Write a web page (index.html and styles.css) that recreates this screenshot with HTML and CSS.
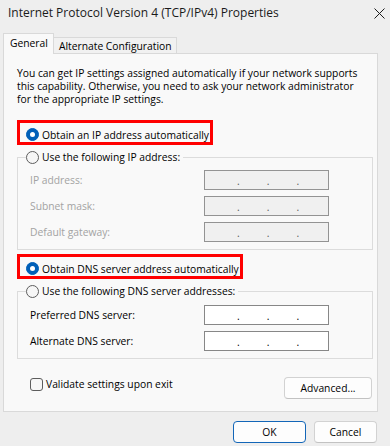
FILE: index.html
```html
<!DOCTYPE html>
<html>
<head>
<meta charset="utf-8">
<link rel="stylesheet" href="styles.css">
</head>
<body>
<div class="window">
  <div class="titlebar">
    <span class="title">Internet Protocol Version 4 (TCP/IPv4) Properties</span>
    <svg class="close" width="11" height="11" viewBox="0 0 11 11"><path d="M0.5 0.5 L10.5 10.5 M10.5 0.5 L0.5 10.5" stroke="#1c1c1c" stroke-width="1" fill="none"/></svg>
  </div>
  <div class="tabs">
    <div class="tab active">General</div>
    <div class="tab">Alternate Configuration</div>
  </div>
  <div class="panel">
    <p class="intro">You can get IP settings assigned automatically if your network supports<br>this capability. Otherwise, you need to ask your network administrator<br>for the appropriate IP settings.</p>

    <div class="highlight">
      <span class="radio on"></span><span>Obtain an IP address automatically</span>
    </div>

    <fieldset class="group">
      <legend><span class="radio"></span><span>Use the following IP address:</span></legend>
      <div class="rows">
        <span class="label disabled">IP address:</span>
        <div class="ip disabled"><span>.</span><span>.</span><span>.</span></div>
        <span class="label disabled">Subnet mask:</span>
        <div class="ip disabled"><span>.</span><span>.</span><span>.</span></div>
        <span class="label disabled">Default gateway:</span>
        <div class="ip disabled"><span>.</span><span>.</span><span>.</span></div>
      </div>
    </fieldset>

    <div class="highlight">
      <span class="radio on"></span><span>Obtain DNS server address automatically</span>
    </div>

    <fieldset class="group">
      <legend><span class="radio"></span><span>Use the following DNS server addresses:</span></legend>
      <div class="rows dns">
        <span class="label">Preferred DNS server:</span>
        <div class="ip"><span>.</span><span>.</span><span>.</span></div>
        <span class="label">Alternate DNS server:</span>
        <div class="ip"><span>.</span><span>.</span><span>.</span></div>
      </div>
    </fieldset>

    <div class="bottom-row">
      <label class="check"><span class="box"></span><span>Validate settings upon exit</span></label>
      <button class="btn advanced">Advanced...</button>
    </div>
  </div>
  <div class="actions">
    <button class="btn ok">OK</button>
    <button class="btn cancel">Cancel</button>
  </div>
</div>
</body>
</html>
```
FILE: styles.css
```css
* { box-sizing: border-box; }
html, body { margin: 0; padding: 0; }
body {
  width: 390px;
  height: 446px;
  overflow: hidden;
  background: #eeeeee;
  font-family: "Open Sans", "Noto Sans", sans-serif;
  font-size: 10.3px;
  color: #000;
}
.window { width: 390px; height: 446px; }

.titlebar {
  height: 25px;
  display: flex;
  align-items: center;
  justify-content: space-between;
  padding: 0 5px 0 8px;
}
.title { font-size: 12px; color: #1a1a1a; }
.close { margin-top: 1px; }

.tabs {
  margin-top: 8px;
  padding-left: 3px;
  display: flex;
  align-items: flex-end;
  height: 20px;
  position: relative;
  z-index: 1;
}
.tab {
  height: 16px;
  display: flex;
  align-items: center;
  padding: 0 4px 0 5px;
  border: 1px solid #d9d9d9;
  border-left: none;
  border-bottom: none;
  background: #f1f1f1;
  line-height: 14px;
}
.tab.active {
  height: 21px;
  margin-bottom: -1px;
  border-left: 1px solid #d9d9d9;
  background: #f9f9f9;
  padding: 0 5px 2px 6px;
}

.panel {
  width: 375px;
  height: 359px;
  margin-left: 3px;
  border: 1px solid #d9d9d9;
  background: #f9f9f9;
  padding: 13px 4px 0 13px;
  display: flex;
  flex-direction: column;
  align-items: flex-start;
}
.intro {
  margin: 0;
  line-height: 13px;
}

.highlight {
  margin-top: 14px;
  height: 25px;
  border: 3px solid #ff0000;
  display: flex;
  align-items: center;
  gap: 3px;
  padding: 4px 1px 0 6px;
  line-height: 14px;
}
.group + .highlight { margin-top: 4px; }

.radio {
  width: 13px;
  height: 13px;
  border-radius: 50%;
  border: 1px solid #5d5d5d;
  background: #f6f6f6;
  display: inline-flex;
  align-items: center;
  justify-content: center;
  flex: none;
}
.radio.on {
  background: #005fb8;
  border-color: #005fb8;
}
.radio.on::after {
  content: "";
  width: 5px;
  height: 5px;
  border-radius: 50%;
  background: #ffffff;
}

.group {
  margin: 4px 0 0 0;
  padding: 0;
  width: 356px;
  min-width: 0;
  border: 1px solid #dcdcdc;
}
.group legend {
  margin-left: 8px;
  padding: 0 3px 0 0;
  height: 16px;
  display: flex;
  align-items: center;
  gap: 3px;
  line-height: 16px;
  background: #f9f9f9;
}

.rows {
  display: grid;
  grid-template-columns: 174px 125px;
  grid-auto-rows: 20px;
  row-gap: 6px;
  align-items: center;
  padding: 5px 0 7px 12px;
}
.rows.dns { padding-top: 6px; }
.label.disabled { color: #a3a3a3; }

.ip {
  height: 20px;
  border: 1px solid #878787;
  background: #ffffff;
  display: flex;
  gap: 27px;
  padding-left: 32px;
  align-items: flex-start;
  line-height: 14px;
  padding-top: 3px;
}
.ip.disabled {
  background: #f0f0f0;
  border-color: #939393;
  color: #5a5a5a;
}

.bottom-row {
  margin-top: 18px;
  width: 356px;
  display: flex;
  justify-content: space-between;
  align-items: flex-start;
}
.check {
  margin-left: 13px;
  margin-top: 1px;
  display: flex;
  align-items: center;
  gap: 3px;
  line-height: 13px;
}
.box {
  width: 13px;
  height: 13px;
  border: 1px solid #5d5d5d;
  border-radius: 3px;
  background: #f6f6f6;
}

.btn {
  font-family: inherit;
  font-size: 10.3px;
  color: #000;
  height: 22px;
  border: 1px solid #d2d2d2;
  border-bottom-color: #c2c2c2;
  border-radius: 4px;
  background: #fdfdfd;
  padding: 0;
  line-height: 18px;
}
.advanced { width: 88px; margin-right: 1px; }

.actions {
  margin-top: 9px;
  display: flex;
  justify-content: flex-end;
  gap: 8px;
  padding-right: 13px;
}
.ok { width: 73px; border: 1px solid #1366b8; }
.cancel { width: 63px; }
```
